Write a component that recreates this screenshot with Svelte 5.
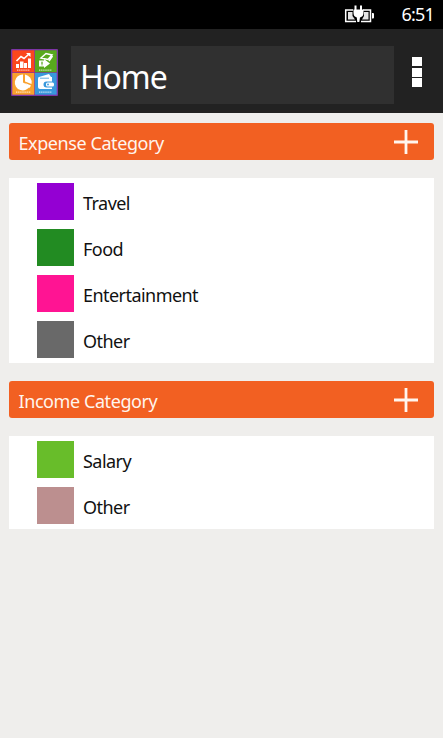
<script lang="ts">
  const groups = [
    {
      title: "Expense Category",
      items: [
        { name: "Travel", color: "#9400d3" },
        { name: "Food", color: "#228b22" },
        { name: "Entertainment", color: "#ff1493" },
        { name: "Other", color: "#696969" },
      ],
    },
    {
      title: "Income Category",
      items: [
        { name: "Salary", color: "#68bd2a" },
        { name: "Other", color: "#bc8f8f" },
      ],
    },
  ];
</script>

<div class="phone">
  <div class="status">
    <svg class="battery" width="32" height="20" viewBox="0 0 32 20">
      <path
        d="M9 5H1.700v11.500H12M19 5h7.500v11.500H17"
        fill="none"
        stroke="#fff"
        stroke-width="1.500"
      />
      <path d="M28 8h1q1 0 1 1v3.500q0 1-1 1h-1z" fill="#fff" />
      <path d="M4 7h4.500v4l2.500 3.500H4zM20 7h4.500v7.500H18l2-3.500z" fill="#e4e4e4" />
      <path
        d="M10.500 0.500h2v4h3.500v-4h2v4h1.500V8q0 3.500-3.500 4.500l-.7 4.500h-2l-.5-4.500Q9.500 11.500 9.500 8V4.500h1z"
        fill="#fff"
      />
    </svg>
    <span class="clock">6:51</span>
  </div>

  <header>
    <svg class="logo" width="47" height="47" viewBox="0 0 47 47">
      <rect width="47" height="47" rx="1" fill="#7d35a5" />
      <rect x="1.300" y="1.300" width="22" height="22" fill="#fb471c" />
      <rect x="24" y="1.300" width="21.700" height="22" fill="#58a91d" />
      <rect x="1.300" y="24" width="22" height="21.700" fill="#f9a12d" />
      <rect x="24" y="24" width="21.700" height="21.700" fill="#3898dc" />
      <!-- chart -->
      <g fill="#fff">
        <path d="M5 15h3v4H5zM9 12.500h3.500V19H9zM13 14h3v5h-3zM17 9.500h3V19h-3z" />
        <path
          d="M5.500 12l4.500-4.500 3 2L18 5"
          fill="none"
          stroke="#fff"
          stroke-width="1.600"
        />
        <path d="M15 4h4.500v4z" />
      </g>
      <!-- money -->
      <g>
        <path
          d="M30 9l5-4.500 6 1.500-4 4.500zM38 12l3.500-5"
          fill="none"
          stroke="#fff"
          stroke-width="1.500"
        />
        <path d="M28 11.500h5V10l6 4.500-6 4.500v-1.500h-5z" fill="#fff" />
        <path d="M31 12.500v4M30 14h2" stroke="#58a91d" stroke-width=".8" />
      </g>
      <!-- pie -->
      <g fill="#fff">
        <path d="M12 33.500V25.500a8 8 0 1 0 7 11.500z" />
        <path d="M14 25.500a8 8 0 0 1 6.500 9.500l-6.500-2.500z" />
        <path d="M14 34l6 2.500-1.500 2.500z" />
      </g>
      <!-- wallet -->
      <g>
        <path
          d="M28 28l10-3 2 3h1v4.500h-5.500a2.500 2.500 0 0 0 0 6H41V40H29q-2 0-2-2v-8q0-2 1-2z"
          fill="#fff"
        />
        <path d="M29 29.200h9" stroke="#3898dc" stroke-width=".8" />
        <rect x="35" y="33.500" width="8" height="4" rx="1.500" fill="#fff" />
        <circle cx="37" cy="35.500" r=".9" fill="#3898dc" />
      </g>
      <g stroke="#fff" stroke-width="1.200" stroke-dasharray="1.400 .7" opacity=".7">
        <path d="M6 21.200h13M28 21.200h13M5 43.200h15M28 43.200h13" />
      </g>
    </svg>
    <h1><span>Home</span></h1>
    <button class="menu" aria-label="Menu">
      <i></i><i></i><i></i>
    </button>
  </header>

  <main>
    {#each groups as group}
      <section>
        <div class="banner">
          <h2>{group.title}</h2>
          <button class="add" aria-label="Add">
            <svg width="26" height="26" viewBox="0 0 26 26">
              <path d="M13 1v24M1 13h24" stroke="#fff5ee" stroke-width="2.800" />
            </svg>
          </button>
        </div>
        <ul>
          {#each group.items as item}
            <li>
              <span class="swatch" style="background: {item.color}"></span>
              <span class="name">{item.name}</span>
            </li>
          {/each}
        </ul>
      </section>
    {/each}
  </main>
</div>

<style>
  :global(body) {
    background: #efeeec;
  }

  .phone {
    height: 738px;
    overflow: hidden;
    background: #efeeec;
    font-family: "Noto Sans", "Open Sans", sans-serif;
  }

  .status {
    height: 29px;
    box-sizing: border-box;
    padding: 0 9px 0 0;
    display: flex;
    align-items: center;
    justify-content: flex-end;
    gap: 25px;
    background: #000;
    color: #fff;
  }

  .clock {
    font-size: 18px;
    line-height: 29px;
    letter-spacing: -0.8px;
  }

  header {
    height: 84px;
    box-sizing: border-box;
    padding: 17px 20px 9px 11px;
    display: flex;
    background: #222;
  }

  .logo {
    margin: 2.500px 13px 0 0;
    flex: none;
  }

  h1 {
    flex: none;
    width: 323px;
    height: 58px;
    box-sizing: border-box;
    margin: 0;
    padding-left: 9px;
    background: #303030;
    color: #fff;
    font-size: 32px;
    font-weight: 400;
    line-height: 61px;
    letter-spacing: -1.100px;
  }

  button {
    padding: 0;
    border: none;
    background: none;
  }

  .menu {
    flex: none;
    display: flex;
    flex-direction: column;
    gap: 1.500px;
    margin: 11px 0 0 18px;
  }

  .menu i {
    width: 10px;
    height: 9px;
    background: #fff;
  }

  main {
    padding: 10px 9px 0;
  }

  section {
    margin-bottom: 18.500px;
  }

  .banner {
    height: 37px;
    box-sizing: border-box;
    padding: 0 15px 0 9.500px;
    display: flex;
    align-items: center;
    justify-content: space-between;
    background: #f26022;
    border-radius: 3px;
  }

  h2 {
    margin: 0;
    padding-top: 3px;
    color: #fff5ee;
    font-size: 18px;
    font-weight: 400;
    line-height: 34px;
    letter-spacing: -0.420px;
  }

  .add,
  .add svg {
    display: block;
  }

  ul {
    margin: 18px 0 0;
    padding: 0 0 0.400px;
    list-style: none;
    background: #fff;
  }

  li {
    height: 46.140px;
    padding-left: 28px;
    display: flex;
    align-items: center;
    gap: 9px;
  }

  .swatch {
    width: 37px;
    height: 37px;
  }

  .name {
    padding-top: 3px;
    color: #111;
    font-size: 18px;
    line-height: 34px;
    letter-spacing: -0.550px;
  }
</style>
